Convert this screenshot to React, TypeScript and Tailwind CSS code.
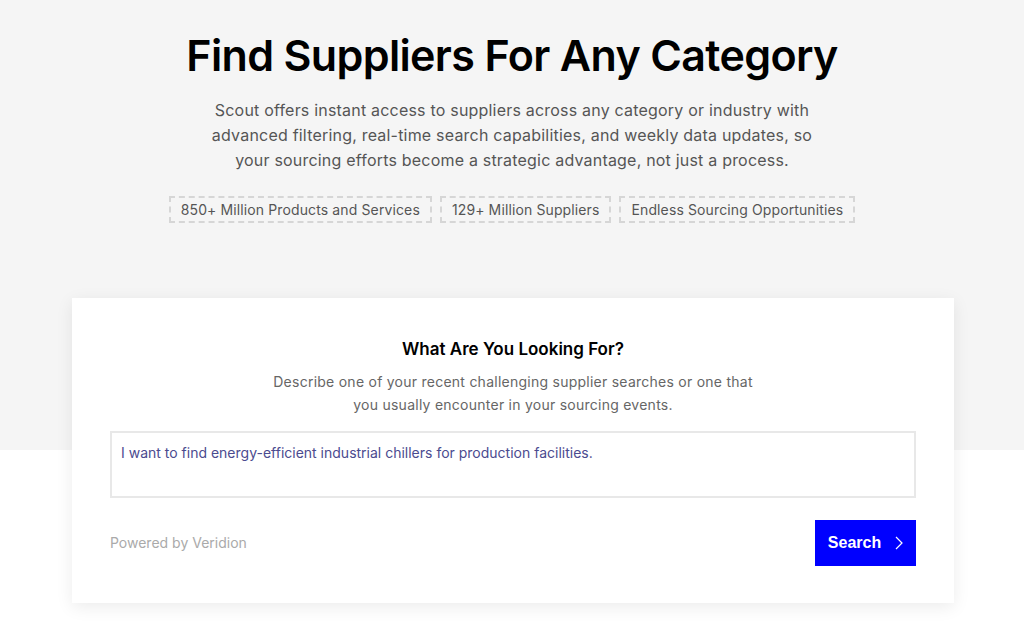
import React from "react";

export default function App() {
  return (
    <div className="min-h-[621px] w-full bg-white" style={{ fontFamily: "Inter, 'Noto Sans', sans-serif" }}>
      <div className="bg-[#f5f5f5] h-[450px] flex flex-col items-center pt-[28px]">
        <h1 className="text-[43px] leading-[54px] font-semibold text-black tracking-[-0.65px]">
          Find Suppliers For Any Category
        </h1>
        <p className="mt-[16px] w-[620px] text-center text-[16px] leading-[25px] text-[#555] tracking-[0.2px]">
          Scout offers instant access to suppliers across any category or industry with advanced filtering, real-time search capabilities, and weekly data updates, so your sourcing efforts become a strategic advantage, not just a process.
        </p>
        <div className="mt-[23px] flex gap-[8px]">
          {["850+ Million Products and Services", "129+ Million Suppliers", "Endless Sourcing Opportunities"].map((t) => (
            <span key={t} className="border-2 border-dashed border-[#d6d6d6] px-[10px] h-[27px] flex items-center text-[14px] text-[#555] tracking-[0.12px]">
              {t}
            </span>
          ))}
        </div>
      </div>
      <div className="-mt-[152px] ml-[72px] mr-[70px] bg-white shadow-[0_4px_16px_rgba(0,0,0,0.08)] px-[38px] pt-[40px] pb-[37px] flex flex-col items-center">
        <h2 className="text-[17px] leading-[22px] font-semibold text-black">What Are You Looking For?</h2>
        <p className="mt-[10px] w-[500px] text-center text-[14px] leading-[23px] text-[#666] tracking-[0.25px]">
          Describe one of your recent challenging supplier searches or one that you usually encounter in your sourcing events.
        </p>
        <div className="mt-[15px] w-full h-[67px] border-2 border-[#e8e8e8] px-[9px] pt-[10px] text-[14px] leading-[20px] text-[#4b4b8f]">
          I want to find energy-efficient industrial chillers for production facilities.
        </div>
        <div className="mt-[22px] w-full flex items-center justify-between">
          <span className="text-[14px] text-[#aaa] -translate-y-[1px]">Powered by Veridion</span>
          <button className="w-[101px] h-[46px] bg-[#0000ff] text-white flex items-center justify-center gap-[14px] text-[16px] font-bold" style={{ fontFamily: "'Liberation Sans', Arial, sans-serif" }}>
            Search
            <svg width="8" height="14" viewBox="0 0 8 14" fill="none" stroke="white" strokeWidth="1.2">
              <path d="M1 1l6 6-6 6" />
            </svg>
          </button>
        </div>
      </div>
    </div>
  );
}
